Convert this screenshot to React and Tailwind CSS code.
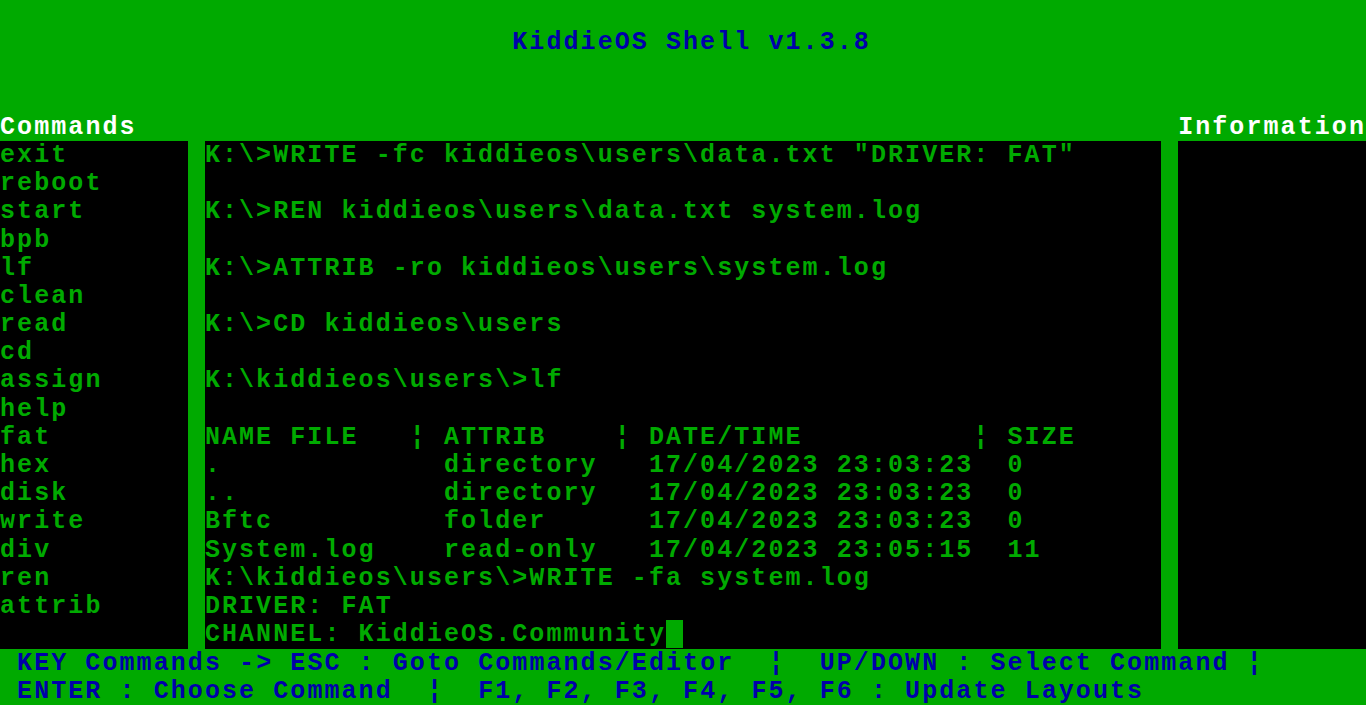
import React from 'react';

// 80x25 text grid scaled to 1366x705 -> cell 17.075 x 28.2
const commands = ['exit', 'reboot', 'start', 'bpb', 'lf', 'clean', 'read', 'cd', 'assign', 'help', 'fat', 'hex', 'disk', 'write', 'div', 'ren', 'attrib'];

const shellLines = [
  'K:\\>WRITE -fc kiddieos\\users\\data.txt "DRIVER: FAT"',
  '',
  'K:\\>REN kiddieos\\users\\data.txt system.log',
  '',
  'K:\\>ATTRIB -ro kiddieos\\users\\system.log',
  '',
  'K:\\>CD kiddieos\\users',
  '',
  'K:\\kiddieos\\users\\>lf',
  '',
  'NAME FILE   \u00a6 ATTRIB    \u00a6 DATE/TIME          \u00a6 SIZE',
  '.             directory   17/04/2023 23:03:23  0',
  '..            directory   17/04/2023 23:03:23  0',
  'Bftc          folder      17/04/2023 23:03:23  0',
  'System.log    read-only   17/04/2023 23:05:15  11',
  'K:\\kiddieos\\users\\>WRITE -fa system.log',
  'DRIVER: FAT',
];

const footer = [
  'KEY Commands -> ESC : Goto Commands/Editor  \u00a6  UP/DOWN : Select Command \u00a6',
  'ENTER : Choose Command  \u00a6  F1, F2, F3, F4, F5, F6 : Update Layouts',
];

const Line = ({ children, className = '' }) => (
  <div className={`h-[28.2px] leading-[28.2px] pt-px whitespace-pre ${className}`}>{children}</div>
);

export default function App() {
  return (
    <div className="w-[1366px] h-[705px] overflow-hidden bg-[#00aa00] font-['Liberation_Mono',monospace] font-bold text-[25px] tracking-[2.075px] text-[#00aa00] flex flex-col">
      {/* title rows 0-3 */}
      <div className="h-[112.8px] flex flex-col">
        <Line />
        <Line className="pl-[512.25px] text-[#0000aa]">KiddieOS Shell v1.3.8</Line>
      </div>

      {/* panel headers */}
      <div className="flex h-[28.2px] text-white">
        <Line className="w-[187.825px]">Commands</Line>
        <div className="w-[17.075px]" />
        <div className="w-[956.2px]" />
        <div className="w-[17.075px]" />
        <Line className="w-[187.825px]">Information</Line>
      </div>

      {/* panels */}
      <div className="flex h-[507.6px]">
        <div className="w-[187.825px] bg-black">
          {commands.map((c) => (
            <Line key={c}>{c}</Line>
          ))}
        </div>
        <div className="w-[17.075px]" />
        <div className="w-[956.2px] bg-black">
          {shellLines.map((l, i) => (
            <Line key={i}>{l}</Line>
          ))}
          <div className="h-[28.2px] flex items-start">
            <span className="leading-[28.2px] pt-px whitespace-pre">CHANNEL: KiddieOS.Community</span>
            <span className="w-[17.075px] h-[28.2px] bg-[#00aa00]" />
          </div>
        </div>
        <div className="w-[17.075px]" />
        <div className="w-[187.825px] bg-black" />
      </div>

      {/* footer */}
      <div className="h-[56.4px] pl-[17.075px] text-[#0000aa]">
        {footer.map((l, i) => (
          <Line key={i}>{l}</Line>
        ))}
      </div>
    </div>
  );
}
